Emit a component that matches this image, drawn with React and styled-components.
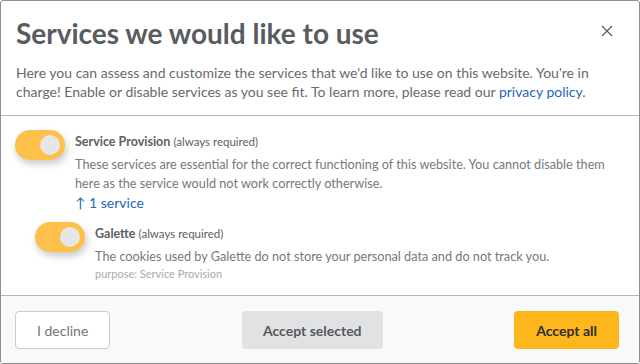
import React, { useState } from 'react';
import styled, { createGlobalStyle } from 'styled-components';

const GlobalStyle = createGlobalStyle`
  html, body {
    margin: 0;
    padding: 0;
    background: #fff;
  }
  body {
    font-family: Lato, "Liberation Sans", sans-serif;
  }
`;

const Modal = styled.div`
  width: 640px;
  height: 364px;
  box-sizing: border-box;
  border: 1px solid #8f8f8f;
  border-radius: 3px;
  display: flex;
  flex-direction: column;
  overflow: hidden;
  background: #fff;
`;

const Header = styled.div`
  padding: 15px 16px 14px 15px;
  border-bottom: 1px solid #b5b5b5;
`;

const TitleRow = styled.div`
  display: flex;
  align-items: center;
  justify-content: space-between;
`;

const Title = styled.h1`
  margin: 0;
  font-size: 28px;
  line-height: 34px;
  font-weight: 700;
  color: #575c61;
`;

const CloseButton = styled.button`
  border: none;
  background: none;
  padding: 0;
  margin: 0 10px 4px 0;
  width: 12px;
  height: 12px;
  display: flex;
  cursor: pointer;
`;

const Intro = styled.p`
  margin: 14px 0 0;
  font-size: 14px;
  line-height: 18.5px;
  color: #666a6e;
`;

const Link = styled.a`
  color: #2766b8;
  text-decoration: none;
`;

const Body = styled.div`
  flex: 1;
  padding: 14px 16px 0 14px;
`;

const ServiceRow = styled.div`
  display: flex;
  gap: 10px;
  margin-left: ${p => p.$indent || 0}px;
  margin-top: ${p => p.$top || 0}px;
`;

const Switch = styled.label`
  position: relative;
  flex: none;
  width: 50px;
  height: 30px;
  border-radius: 15px;
  background: #fdc04a;
  box-shadow: 0 4px 6px 0 rgba(0, 0, 0, 0.12), 4px 4px 9px 0 rgba(0, 0, 0, 0.1);
  cursor: not-allowed;

  &::before {
    content: '';
    position: absolute;
    width: 20px;
    height: 20px;
    border-radius: 50%;
    top: 5px;
    left: ${p => (p.$on ? 25 : 5)}px;
    background: #e6e6e6;
  }
`;

const ServiceText = styled.div`
  display: flex;
  flex-direction: column;
  padding-top: 2px;
`;

const ServiceTitle = styled.div`
  font-size: 12.5px;
  line-height: 20px;
  font-weight: 700;
  color: #5c6065;
`;

const Required = styled.span`
  font-size: 11.5px;
  font-weight: 400;
`;

const ServiceDesc = styled.p`
  margin: 3px 0 0;
  font-size: 12.7px;
  line-height: 19px;
  color: #75797d;
`;

const Toggle = styled.a`
  font-size: 14px;
  line-height: 19px;
  color: #2766b8;
  text-decoration: none;
`;

const Purpose = styled.div`
  font-size: 11px;
  line-height: 15px;
  color: #a8abae;
`;

const Footer = styled.div`
  display: flex;
  justify-content: space-between;
  align-items: center;
  padding: 15px 20px 14px 14px;
  border-top: 1px solid #b5b5b5;
  background: #f8f9fa;
`;

const Button = styled.button`
  height: 38px;
  padding: 0 ${p => p.$pad}px;
  border-radius: 4px;
  font-family: Lato, "Liberation Sans", sans-serif;
  font-size: 14px;
  cursor: pointer;
  border: 1px solid ${p => (p.$variant === 'decline' ? '#c9cbcd' : 'transparent')};
  background: ${p =>
    p.$variant === 'all' ? '#fdb61b' : p.$variant === 'selected' ? '#e1e2e4' : '#fff'};
  color: ${p => (p.$variant === 'all' ? '#2e2e2e' : p.$variant === 'selected' ? '#55595d' : '#73777b')};
  font-weight: ${p => (p.$variant === 'decline' ? 400 : 700)};
`;

export default function App() {
  const [open, setOpen] = useState(true);

  return (
    <>
      <GlobalStyle />
      <Modal>
        <Header>
          <TitleRow>
            <Title>Services we would like to use</Title>
            <CloseButton aria-label="close" onClick={() => setOpen(!open)}>
              <svg width="12" height="12" viewBox="0 0 12 12">
                <path d="M1 1 L11 11 M11 1 L1 11" stroke="#555" strokeWidth="1.1" />
              </svg>
            </CloseButton>
          </TitleRow>
          <Intro>
            Here you can assess and customize the services that we'd like to use on this website. You're in
            charge! Enable or disable services as you see fit. To learn more, please read our{' '}
            <Link href="#">privacy policy</Link>.
          </Intro>
        </Header>

        <Body>
          <ServiceRow>
            <Switch $on />
            <ServiceText>
              <ServiceTitle>
                Service Provision <Required>(always required)</Required>
              </ServiceTitle>
              <ServiceDesc>
                These services are essential for the correct functioning of this website. You cannot disable them
                here as the service would not work correctly otherwise.
              </ServiceDesc>
              <Toggle href="#">↑ 1 service</Toggle>
            </ServiceText>
          </ServiceRow>
          <ServiceRow $indent={20} $top={10}>
            <Switch $on />
            <ServiceText>
              <ServiceTitle>
                Galette <Required>(always required)</Required>
              </ServiceTitle>
              <ServiceDesc>
                The cookies used by Galette do not store your personal data and do not track you.
              </ServiceDesc>
              <Purpose>purpose: Service Provision</Purpose>
            </ServiceText>
          </ServiceRow>
        </Body>

        <Footer>
          <Button $variant="decline" $pad={21}>I decline</Button>
          <Button $variant="selected" $pad={20}>Accept selected</Button>
          <Button $variant="all" $pad={21}>Accept all</Button>
        </Footer>
      </Modal>
    </>
  );
}
